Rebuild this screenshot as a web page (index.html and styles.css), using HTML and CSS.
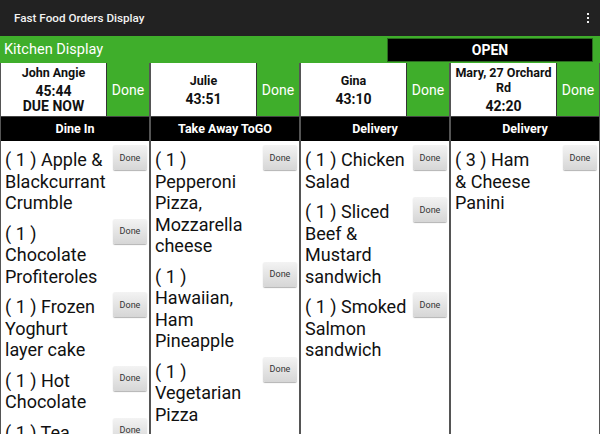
FILE: index.html
```html
<!DOCTYPE html>
<html lang="en">
<head>
<meta charset="UTF-8">
<meta name="viewport" content="width=device-width, initial-scale=1.0">
<title>Fast Food Orders Display</title>
<link rel="stylesheet" href="styles.css">
</head>
<body>
<div class="appbar">
    <span class="app-title">Fast Food Orders Display</span>
    <span class="menu"><i></i><i></i><i></i></span>
</div>
<div class="kitchen-bar">
    <span class="kitchen-title">Kitchen Display</span>
    <div class="open">OPEN</div>
</div>

<div class="board">
    <div class="column">
        <div class="ticket">
            <div class="ticket-info">
                <div class="ticket-name">John Angie</div>
                <div class="ticket-time">45:44<br>DUE NOW</div>
            </div>
            <div class="ticket-done">Done</div>
        </div>
        <div class="section">Dine In</div>
        <div class="items">
            <div class="item"><div class="item-name">( 1 ) Apple &amp;<br>Blackcurrant<br>Crumble</div><button class="item-btn">Done</button></div>
            <div class="item"><div class="item-name">( 1 )<br>Chocolate<br>Profiteroles</div><button class="item-btn">Done</button></div>
            <div class="item"><div class="item-name">( 1 ) Frozen<br>Yoghurt<br>layer cake</div><button class="item-btn">Done</button></div>
            <div class="item"><div class="item-name">( 1 ) Hot<br>Chocolate</div><button class="item-btn">Done</button></div>
            <div class="item"><div class="item-name">( 1 ) Tea</div><button class="item-btn">Done</button></div>
        </div>
    </div>

    <div class="column">
        <div class="ticket">
            <div class="ticket-info">
                <div class="ticket-name">Julie</div>
                <div class="ticket-time">43:51</div>
            </div>
            <div class="ticket-done">Done</div>
        </div>
        <div class="section">Take Away ToGO</div>
        <div class="items">
            <div class="item"><div class="item-name">( 1 )<br>Pepperoni<br>Pizza,<br>Mozzarella<br>cheese</div><button class="item-btn">Done</button></div>
            <div class="item"><div class="item-name">( 1 )<br>Hawaiian,<br>Ham<br>Pineapple</div><button class="item-btn">Done</button></div>
            <div class="item"><div class="item-name">( 1 )<br>Vegetarian<br>Pizza</div><button class="item-btn">Done</button></div>
        </div>
    </div>

    <div class="column">
        <div class="ticket">
            <div class="ticket-info">
                <div class="ticket-name">Gina</div>
                <div class="ticket-time">43:10</div>
            </div>
            <div class="ticket-done">Done</div>
        </div>
        <div class="section">Delivery</div>
        <div class="items">
            <div class="item"><div class="item-name">( 1 ) Chicken<br>Salad</div><button class="item-btn">Done</button></div>
            <div class="item"><div class="item-name">( 1 ) Sliced<br>Beef &amp;<br>Mustard<br>sandwich</div><button class="item-btn">Done</button></div>
            <div class="item"><div class="item-name">( 1 ) Smoked<br>Salmon<br>sandwich</div><button class="item-btn">Done</button></div>
        </div>
    </div>

    <div class="column">
        <div class="ticket">
            <div class="ticket-info">
                <div class="ticket-name">Mary, 27 Orchard<br>Rd</div>
                <div class="ticket-time">42:20</div>
            </div>
            <div class="ticket-done">Done</div>
        </div>
        <div class="section">Delivery</div>
        <div class="items">
            <div class="item"><div class="item-name">( 3 ) Ham<br>&amp; Cheese<br>Panini</div><button class="item-btn">Done</button></div>
        </div>
    </div>
</div>
</body>
</html>
```

FILE: styles.css
```css
body {
    margin: 0;
    width: 600px;
    height: 434px;
    overflow: hidden;
    font-family: Roboto, "Liberation Sans", sans-serif;
    background: #ffffff;
}
.appbar {
    height: 36px;
    background: #222222;
    display: flex;
    align-items: center;
    padding: 0 11px 0 14px;
}
.app-title {
    color: #f2f2f2;
    font-size: 11.7px;
    font-weight: 500;
}
.menu {
    margin-left: auto;
    display: flex;
    flex-direction: column;
    gap: 1.5px;
}
.menu i {
    width: 2.5px;
    height: 2.5px;
    background: #f0f0f0;
}
.kitchen-bar {
    height: 27px;
    background: #3fae2b;
    display: flex;
    align-items: center;
}
.kitchen-title {
    color: #ffffff;
    font-size: 14.5px;
    padding-left: 4px;
}
.open {
    margin-left: auto;
    margin-right: 7px;
    width: 204px;
    height: 22px;
    background: #000000;
    border: 1px solid #2b6a20;
    color: #ffffff;
    font-size: 14px;
    font-weight: bold;
    text-align: center;
    line-height: 22px;
}
.board {
    display: grid;
    grid-template-columns: repeat(4, 150px);
    height: 371px;
}
.column {
    display: flex;
    flex-direction: column;
    border-left: 1px solid #555555;
    border-right: 1px solid #555555;
    min-height: 0;
}
.ticket {
    display: flex;
    height: 53px;
    border-bottom: 1px solid #444444;
}
.ticket-info {
    flex: 1;
    background: #ffffff;
    border-right: 1px solid #333333;
    display: flex;
    flex-direction: column;
    justify-content: center;
    text-align: center;
    font-weight: bold;
    color: #111111;
}
.ticket-name {
    font-size: 12.5px;
    line-height: 15px;
}
.ticket-time {
    font-size: 14px;
    line-height: 15px;
    margin-top: 4px;
}
.ticket-done {
    width: 42px;
    background: #3fae2b;
    color: #ffffff;
    font-size: 14px;
    display: flex;
    align-items: center;
    justify-content: center;
}
.section {
    height: 24px;
    background: #000000;
    color: #ffffff;
    font-size: 12.5px;
    font-weight: bold;
    text-align: center;
    line-height: 24px;
}
.items {
    flex: 1;
    overflow: hidden;
}
.item {
    display: flex;
    align-items: flex-start;
}
.item-name {
    flex: 1;
    padding: 8px 0 1px 4px;
    font-size: 18px;
    line-height: 21.5px;
    color: #111111;
}
.item-btn {
    width: 34px;
    height: 25px;
    margin: 4px 2px 0 0;
    padding: 0;
    border: none;
    border-radius: 2px;
    background: linear-gradient(#f3f3f3, #d6d6d6);
    box-shadow: 0 1px 1px rgba(0,0,0,0.3);
    font-family: Roboto, "Liberation Sans", sans-serif;
    font-size: 9px;
    color: #333333;
}
```
